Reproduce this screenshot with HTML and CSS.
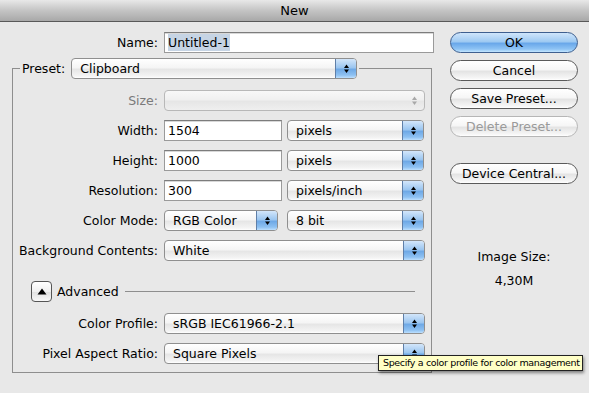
FILE: index.html
```html
<!DOCTYPE html>
<html>
<head>
<meta charset="utf-8">
<link rel="stylesheet" href="styles.css">
</head>
<body>
<div class="titlebar">New</div>
<div class="dialog">
  <div class="main">
    <div class="row name-row">
      <label class="lbl name-lbl">Name:</label>
      <div class="input name-input"><span class="sel-text">Untitled-1</span></div>
    </div>
    <fieldset class="group">
      <legend class="legend">
        <span class="legend-lbl">Preset:</span>
        <div class="popup w-preset"><span class="ptext">Clipboard</span><span class="stepper"><svg width="7" height="11" viewBox="0 0 7 11"><polygon points="3.5,1.5 6,5 1,5"/><polygon points="1,6.5 6,6.5 3.5,10"/></svg></span></div>
      </legend>
      <div class="row first">
        <label class="lbl disabled-lbl">Size:</label>
        <div class="popup disabled w-full"><span class="ptext"></span><span class="stepper gray"><svg width="7" height="11" viewBox="0 0 7 11"><polygon points="3.5,1.5 6,5 1,5"/><polygon points="1,6.5 6,6.5 3.5,10"/></svg></span></div>
      </div>
      <div class="row">
        <label class="lbl">Width:</label>
        <div class="input w-num">1504</div>
        <div class="popup w-unit"><span class="ptext">pixels</span><span class="stepper"><svg width="7" height="11" viewBox="0 0 7 11"><polygon points="3.5,1.5 6,5 1,5"/><polygon points="1,6.5 6,6.5 3.5,10"/></svg></span></div>
      </div>
      <div class="row">
        <label class="lbl">Height:</label>
        <div class="input w-num">1000</div>
        <div class="popup w-unit"><span class="ptext">pixels</span><span class="stepper"><svg width="7" height="11" viewBox="0 0 7 11"><polygon points="3.5,1.5 6,5 1,5"/><polygon points="1,6.5 6,6.5 3.5,10"/></svg></span></div>
      </div>
      <div class="row">
        <label class="lbl">Resolution:</label>
        <div class="input w-num">300</div>
        <div class="popup w-unit"><span class="ptext">pixels/inch</span><span class="stepper"><svg width="7" height="11" viewBox="0 0 7 11"><polygon points="3.5,1.5 6,5 1,5"/><polygon points="1,6.5 6,6.5 3.5,10"/></svg></span></div>
      </div>
      <div class="row">
        <label class="lbl">Color Mode:</label>
        <div class="popup w-mode"><span class="ptext">RGB Color</span><span class="stepper"><svg width="7" height="11" viewBox="0 0 7 11"><polygon points="3.5,1.5 6,5 1,5"/><polygon points="1,6.5 6,6.5 3.5,10"/></svg></span></div>
        <div class="popup w-unit"><span class="ptext">8 bit</span><span class="stepper"><svg width="7" height="11" viewBox="0 0 7 11"><polygon points="3.5,1.5 6,5 1,5"/><polygon points="1,6.5 6,6.5 3.5,10"/></svg></span></div>
      </div>
      <div class="row">
        <label class="lbl">Background Contents:</label>
        <div class="popup w-full"><span class="ptext">White</span><span class="stepper"><svg width="7" height="11" viewBox="0 0 7 11"><polygon points="3.5,1.5 6,5 1,5"/><polygon points="1,6.5 6,6.5 3.5,10"/></svg></span></div>
      </div>
      <div class="adv-row">
        <div class="disclosure"><svg width="10" height="7" viewBox="0 0 10 7"><polygon points="5,0.5 9.5,6.5 0.5,6.5"/></svg></div>
        <span class="adv-text">Advanced</span>
        <div class="adv-line"></div>
      </div>
      <div class="row">
        <label class="lbl">Color Profile:</label>
        <div class="popup w-full"><span class="ptext">sRGB IEC61966-2.1</span><span class="stepper"><svg width="7" height="11" viewBox="0 0 7 11"><polygon points="3.5,1.5 6,5 1,5"/><polygon points="1,6.5 6,6.5 3.5,10"/></svg></span></div>
      </div>
      <div class="row">
        <label class="lbl">Pixel Aspect Ratio:</label>
        <div class="popup w-full"><span class="ptext">Square Pixels</span><span class="stepper"><svg width="7" height="11" viewBox="0 0 7 11"><polygon points="3.5,1.5 6,5 1,5"/><polygon points="1,6.5 6,6.5 3.5,10"/></svg></span></div>
      </div>
    </fieldset>
  </div>
  <div class="side">
    <div class="btn default">OK</div>
    <div class="btn">Cancel</div>
    <div class="btn">Save Preset...</div>
    <div class="btn disabled-btn">Delete Preset...</div>
    <div class="btn device">Device Central...</div>
    <div class="info">
      <div class="info-lbl">Image Size:</div>
      <div class="info-val">4,30M</div>
    </div>
  </div>
</div>
<div class="tooltip">Specify a color profile for color management</div>
</body>
</html>
```

FILE: styles.css
```css
html, body {
  margin: 0;
  padding: 0;
}
body {
  width: 589px;
  height: 393px;
  overflow: hidden;
  background: #e8e8e8;
  font-family: "DejaVu Sans", "Liberation Sans", sans-serif;
  font-size: 12.5px;
  color: #000;
  position: relative;
}
.titlebar {
  height: 21px;
  line-height: 21px;
  text-align: center;
  background: linear-gradient(#e8e8e8, #c4c4c4 50%, #a8a8a8);
  border-bottom: 1px solid #595959;
  font-size: 13px;
}
.dialog {
  display: flex;
  padding-top: 10px;
}
.main {
  width: 434px;
}
.row {
  display: flex;
  align-items: center;
  height: 21px;
  margin-top: 9px;
}
.row.first {
  margin-top: 11px;
}
.name-row {
  margin-top: 0;
}
.lbl {
  width: 145px;
  text-align: right;
  padding-right: 6px;
  flex: none;
  white-space: nowrap;
}
.name-lbl {
  width: 158px;
}
.disabled-lbl {
  color: #7a7a7a;
}
.input {
  box-sizing: border-box;
  height: 21px;
  line-height: 19px;
  background: #fff;
  border: 1px solid #9a9a9a;
  border-top-color: #7c7c7c;
  box-shadow: inset 0 1px 0 #d8d8d8;
  padding-left: 3px;
  flex: none;
}
.name-input {
  width: 270px;
}
.sel-text {
  background: #c6d4e4;
  padding: 1px 0;
}
.w-num {
  width: 118px;
  margin-right: 5px;
}
.popup {
  box-sizing: border-box;
  height: 21px;
  display: flex;
  align-items: stretch;
  border: 1px solid #8f8f8f;
  border-radius: 4px;
  background: linear-gradient(#ffffff, #f5f5f5 45%, #e6e6e6 55%, #f4f4f4 90%, #ffffff);
  overflow: hidden;
  flex: none;
}
.ptext {
  flex: 1;
  line-height: 19px;
  padding-left: 8px;
  white-space: nowrap;
}
.stepper {
  width: 20px;
  flex: none;
  display: flex;
  align-items: center;
  justify-content: center;
  background: linear-gradient(#d3e6fa, #9cc6f0 45%, #6fa9e6 55%, #8ec1f2 85%, #bde0ff);
  border-left: 1px solid #5f7fa8;
}
.stepper svg {
  fill: #000;
}
.stepper.gray {
  background: transparent;
  border-left: none;
}
.stepper.gray svg {
  fill: #a8a8a8;
}
.popup.disabled {
  border-color: #b8b8b8;
  background: linear-gradient(#f8f8f8, #f0f0f0 45%, #e6e6e6 55%, #efefef);
}
.w-preset {
  width: 286px;
  margin-left: 6px;
}
.w-full {
  width: 261px;
}
.w-unit {
  width: 137px;
}
.w-mode {
  width: 114px;
  margin-right: 9px;
}
.group {
  margin: 5px 0 0 12px;
  padding: 0 0 8px 0;
  width: 420px;
  box-sizing: border-box;
  border: 1px solid #8e8e8e;
  min-width: 0;
}
.legend {
  display: flex;
  align-items: center;
  margin-left: 7px;
  padding: 0 2px;
  height: 21px;
}
.legend-lbl {
  white-space: nowrap;
}
.adv-row {
  display: flex;
  align-items: center;
  height: 21px;
  margin-top: 20px;
  margin-bottom: 11px;
  padding-left: 18px;
}
.disclosure {
  box-sizing: border-box;
  width: 21px;
  height: 21px;
  border: 1px solid #555;
  border-radius: 4px;
  background: linear-gradient(#ffffff, #f0f0f0 50%, #e2e2e2 55%, #f8f8f8);
  display: flex;
  align-items: center;
  justify-content: center;
  flex: none;
}
.disclosure svg {
  fill: #000;
}
.adv-text {
  margin-left: 5px;
}
.adv-line {
  height: 1px;
  background: #8e8e8e;
  width: 290px;
  margin-left: 6px;
}
.side {
  width: 128px;
  margin-left: 16px;
  display: flex;
  flex-direction: column;
}
.btn {
  box-sizing: border-box;
  height: 21px;
  line-height: 19px;
  text-align: center;
  border: 1px solid #5a5a5a;
  border-radius: 11px;
  background: linear-gradient(#ffffff, #f6f6f6 45%, #e4e4e4 55%, #f6f6f6 90%, #ffffff);
  margin-bottom: 7px;
  white-space: nowrap;
}
.btn.default {
  border-color: #3e5f8f;
  background: linear-gradient(#cfe5fb, #9fcaf2 45%, #6aa8ea 55%, #8fc4f5 85%, #c3e6ff);
}
.btn.disabled-btn {
  border-color: #b6b6b6;
  color: #9a9a9a;
}
.btn.device {
  margin-top: 19px;
}
.info {
  text-align: center;
  margin-top: 58px;
}
.info-val {
  margin-top: 9px;
}
.tooltip {
  position: absolute;
  left: 378px;
  top: 355px;
  width: 205px;
  height: 16px;
  box-sizing: border-box;
  background: #ffffc6;
  border: 1px solid #222;
  font-size: 9.5px;
  letter-spacing: -0.35px;
  line-height: 14px;
  padding-left: 4px;
  white-space: nowrap;
  overflow: hidden;
  box-shadow: 1px 2px 3px rgba(0,0,0,0.45);
}
```
